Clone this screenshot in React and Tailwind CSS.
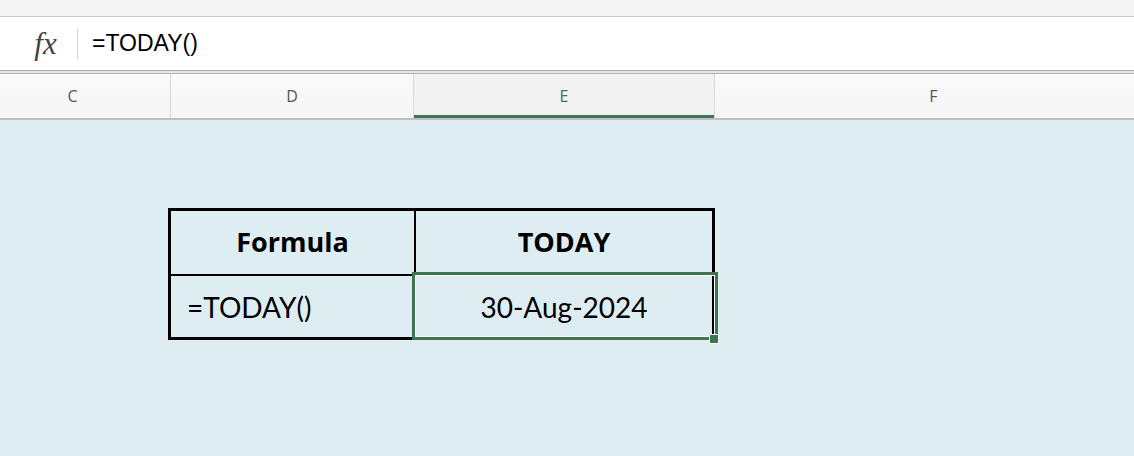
import React from 'react';

const columns = [
  { key: 'C', width: 'w-[196px] ml-[-25px]' },
  { key: 'D', width: 'w-[243px]' },
  { key: 'E', width: 'w-[301px]', active: true },
  { key: 'F', width: 'w-[437px]' },
];

const FormulaBar = ({ value }) => (
  <div className="h-[54px] bg-white border-t border-[#c9c9c9] flex items-center">
    <div className="w-[77px] flex justify-center pl-[14px]">
      <span className="text-[31px] italic text-[#444] leading-none" style={{ fontFamily: '"Liberation Serif", serif' }}>
        fx
      </span>
    </div>
    <div className="w-px h-[30px] bg-[#d4d4d4]" />
    <div className="pl-[14px] text-[23px] text-black" style={{ fontFamily: '"Liberation Sans", Arial, sans-serif' }}>
      {value}
    </div>
  </div>
);

const ColumnHeaders = () => (
  <div className="border-t border-[#a9a9a9]">
    <div className="h-[3px] bg-[#e6e6e6] border-b border-[#b4b4b4]" />
    <div className="flex h-[46px] overflow-hidden bg-gradient-to-b from-[#fafafa] to-[#f5f5f5] border-b-2 border-[#bfbfbf]">
      {columns.map((col, i) => (
        <div
          key={col.key}
          className={`${col.width} shrink-0 relative flex items-center justify-center text-[16px] ${
            col.active ? 'bg-[#f2f2f2] text-[#3c7550]' : 'text-[#555]'
          } ${i < columns.length - 1 ? 'border-r border-[#dadada]' : ''}`}
          style={{ fontFamily: '"Open Sans", sans-serif' }}
        >
          {col.key}
          {col.active && <div className="absolute left-0 right-0 bottom-0 h-[3px] bg-[#3c7550]" />}
        </div>
      ))}
    </div>
  </div>
);

export default function App() {
  const headFont = { fontFamily: '"Open Sans", sans-serif' };
  const cellFont = { fontFamily: 'Lato, "Open Sans", sans-serif' };

  return (
    <div className="w-[1134px] h-[456px] bg-[#deedf2] overflow-hidden">
      {/* Ribbon strip */}
      <div className="h-[16px] bg-[#f4f4f4]" />
      <FormulaBar value="=TODAY()" />
      <ColumnHeaders />

      {/* Sheet */}
      <div className="pt-[88px] pl-[168px]">
        <div className="w-[547px] border-[3px] border-black text-black">
          <div className="flex h-[65px] border-b-2 border-black text-[27px] font-bold" style={headFont}>
            <div className="w-[245px] border-r-2 border-black flex items-center justify-center">
              Formula
            </div>
            <div className="flex-1 flex items-center justify-center">TODAY</div>
          </div>
          <div className="flex h-[61px] text-[28px]" style={cellFont}>
            <div className="w-[245px] border-r-2 border-black flex items-center pl-[16px]">
              =TODAY()
            </div>
            <div className="flex-1 relative flex items-center justify-center">
              30-Aug-2024
              {/* selection outline */}
              <div className="absolute left-[-4px] top-[-4px] right-[-6px] bottom-[-3px] border-[3px] border-[#3c7550] pointer-events-none">
                <div className="w-full h-full border border-white" />
              </div>
              <div className="absolute right-[-7px] bottom-[-7px] w-[10px] h-[10px] bg-[#3c7550] border border-white" />
            </div>
          </div>
        </div>
      </div>
    </div>
  );
}
